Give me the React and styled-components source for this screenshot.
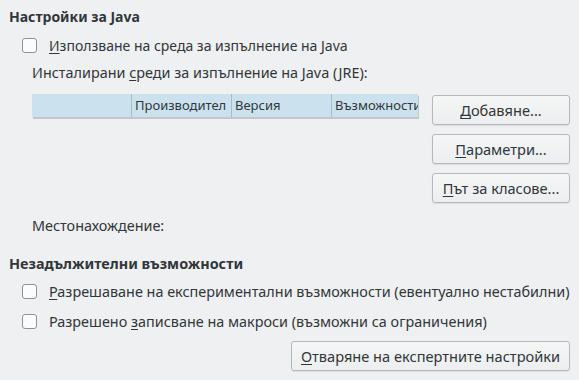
import styled, { createGlobalStyle } from "styled-components";

const Global = createGlobalStyle`
  body {
    margin: 0;
    background: #eff0f1;
    font-family: "Noto Sans", "Open Sans", sans-serif;
    font-size: 14.4px;
    color: #31363b;
  }
`;

const Page = styled.div`
  width: 579px;
  height: 380px;
  box-sizing: border-box;
  padding: 6px 9px 0 9px;
  display: flex;
  flex-direction: column;
`;

const Heading = styled.div`
  font-weight: bold;
  font-size: ${(p) => p.size || 14.4}px;
  height: ${(p) => p.h || 22}px;
  line-height: ${(p) => p.h || 22}px;
  margin-top: ${(p) => p.mt || 0}px;
`;

const CheckRow = styled.label`
  display: flex;
  align-items: center;
  gap: 12px;
  height: 30px;
  padding-left: 13px;
  font-size: ${(p) => p.size || 14.4}px;
  margin-top: ${(p) => p.mt || 0}px;
`;

const Box = styled.span`
  width: 13px;
  height: 13px;
  border: 1px solid #8f9295;
  border-radius: 3px;
  background: #fcfcfc;
  flex: none;
`;

const Indent = styled.div`
  padding-left: 23px;
  display: flex;
  flex-direction: column;
`;

const Label = styled.div`
  height: 26px;
  line-height: 26px;
  margin-top: ${(p) => p.mt || 0}px;
`;

const JreRow = styled.div`
  display: flex;
  gap: 14px;
  margin-top: 9px;
`;

const Table = styled.div`
  flex: 1;
  align-self: flex-start;
  display: grid;
  grid-template-columns: 99px 100px 100px 1fr;
  height: 23px;
  background: #cbe2ee;
  margin-top: -1px;
  box-shadow: 1px 2px 0 #c4c6c8;
  overflow: hidden;
`;

const Col = styled.div`
  border-left: ${(p) => (p.first ? "none" : "1px solid #a9bdc9")};
  padding-left: 3px;
  line-height: 23px;
  font-size: 13px;
  white-space: nowrap;
  overflow: hidden;
`;

const Buttons = styled.div`
  display: flex;
  flex-direction: column;
  gap: 9px;
`;

const Button = styled.button`
  font-family: inherit;
  font-size: 14.6px;
  color: #31363b;
  width: ${(p) => p.w || 138}px;
  height: 30px;
  border: 1px solid #b6b8ba;
  border-radius: 3px;
  background: linear-gradient(#f5f6f6, #eceeef);
  box-shadow: 0 1px 1px rgba(0, 0, 0, 0.08);
  padding: 0;
  white-space: nowrap;
  align-self: ${(p) => p.align || "auto"};
  margin-top: ${(p) => p.mt || 0}px;
`;

const U = styled.span`
  text-decoration: underline;
  text-underline-offset: 2px;
`;

export default function App() {
  return (
    <Page>
      <Global />
      <Heading size={14}>Настройки за Java</Heading>
      <CheckRow mt={2} size={14}>
        <Box />
        <span>
          <U>И</U>зползване на среда за изпълнение на Java
        </span>
      </CheckRow>
      <Indent>
        <Label>
          Инсталирани <U>с</U>реди за изпълнение на Java (JRE):
        </Label>
        <JreRow>
          <Table>
            <Col first />
            <Col>Производител</Col>
            <Col>Версия</Col>
            <Col>Възможности</Col>
          </Table>
          <Buttons>
            <Button>
              <U>Д</U>обавяне...
            </Button>
            <Button>
              <U>П</U>араметри...
            </Button>
            <Button>
              <U>П</U>ът за класове...
            </Button>
          </Buttons>
        </JreRow>
        <Label mt={10}>Местонахождение:</Label>
      </Indent>
      <Heading h={24} mt={13}>
        Незадължителни възможности
      </Heading>
      <CheckRow>
        <Box />
        <span>
          <U>Р</U>азрешаване на експериментални възможности (евентуално нестабилни)
        </span>
      </CheckRow>
      <CheckRow>
        <Box />
        <span>
          Разрешено <U>з</U>аписване на макроси (възможни са ограничения)
        </span>
      </CheckRow>
      <Button w={279} align="flex-end" mt={5}>
        <U>О</U>тваряне на експертните настройки
      </Button>
    </Page>
  );
}
